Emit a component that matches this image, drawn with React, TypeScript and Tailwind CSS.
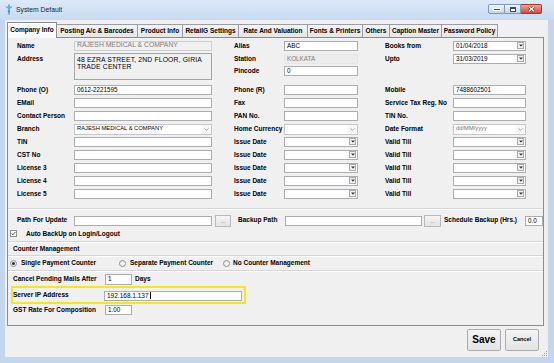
import React from "react";

const lbl = "whitespace-nowrap text-[6.5px] font-bold leading-none text-black";
const txt = "whitespace-nowrap text-[6.3px] leading-none";

function Field({ value = "", className = "" }: { value?: string; className?: string }) {
  return (
    <div
      className={`flex h-[10px] items-center overflow-hidden border border-[#abadb3] bg-white px-[2px] text-black ${txt} ${className}`}
    >
      {value}
    </div>
  );
}

function Arrow() {
  return (
    <svg width="4" height="3" viewBox="0 0 4 3">
      <path d="M0 0.4h4L2 2.8z" fill="#3a3a3a" />
    </svg>
  );
}

function DateBox({ value = "" }: { value?: string }) {
  return (
    <div className="flex h-[10px] items-center border border-[#abadb3] bg-white pl-[2px] pr-[1px]">
      <span className={`flex-1 overflow-hidden text-black ${txt}`}>{value}</span>
      <span className="flex h-[7px] w-[7px] items-center justify-center border border-[#a9a9a9] bg-[#f2f2f2]">
        <Arrow />
      </span>
    </div>
  );
}

function Combo({ value = "", muted = false }: { value?: string; muted?: boolean }) {
  return (
    <div className="flex h-[11px] items-center border border-[#c8c8c8] bg-white pl-[2px]">
      <span
        className={`flex-1 overflow-hidden whitespace-nowrap text-[5.8px] leading-none ${
          muted ? "text-[#6d6d6d]" : "text-black"
        }`}
      >
        {value}
      </span>
      <span className="flex h-full w-[9px] items-center justify-center bg-[#f7f7f7]">
        <svg width="5" height="3" viewBox="0 0 5 3">
          <path d="M0.6 0.5L2.5 2.4L4.4 0.5" fill="none" stroke="#8c8c8c" strokeWidth="0.8" />
        </svg>
      </span>
    </div>
  );
}

function DotsBtn({ w }: { w: string }) {
  return (
    <div
      className={`flex h-[12px] ${w} items-end justify-center border border-[#b9b9b9] bg-linear-to-b from-[#f6f6f6] to-[#e2e2e2] pb-[2px] text-[5px] leading-none text-[#444]`}
    >
      ...
    </div>
  );
}

type Pair = [string, React.ReactNode];

function FormRow({ a, b, c }: { a: Pair; b: Pair; c: Pair }) {
  return (
    <div className="flex h-[13px] items-start pl-[9px]">
      <div className={`flex h-[10px] w-[57px] items-center ${lbl}`}>{a[0]}</div>
      <div className="w-[138px]">{a[1]}</div>
      <div className={`ml-[22px] flex h-[10px] w-[50px] items-center ${lbl}`}>{b[0]}</div>
      <div className="w-[74px]">{b[1]}</div>
      <div className={`ml-[27px] flex h-[10px] w-[68px] items-center ${lbl}`}>{c[0]}</div>
      <div className="w-[73px]">{c[1]}</div>
    </div>
  );
}

function Etched() {
  return (
    <div>
      <div className="h-px bg-[#d5d5d5]" />
      <div className="h-px bg-white" />
    </div>
  );
}

function Radio({ checked = false }: { checked?: boolean }) {
  return (
    <span className="flex h-[7px] w-[7px] items-center justify-center rounded-full border border-[#8e8f8f] bg-linear-to-br from-[#e6e6e6] to-white">
      {checked && <span className="h-[3px] w-[3px] rounded-full bg-[#2b2b2b]" />}
    </span>
  );
}

function TitleBar() {
  return (
    <div className="flex h-[20px] shrink-0 items-start bg-linear-to-b from-[#dde9f7] to-[#c7daf0]">
      <svg className="ml-[5px] mt-[4px]" width="8" height="11" viewBox="0 0 8 11">
        <path d="M4 0.5V10.5" stroke="#2f8fb8" strokeWidth="1.2" />
        <path d="M0.5 2.5C2 2 3 3 4 4C5 3 6 2 7.5 2.5C6.5 4 5 4.5 4 5C3 4.5 1.5 4 0.5 2.5Z" fill="#4fb3d6" />
        <path d="M2.5 6.5C3.5 6 4.5 7.5 5.5 7C5 8.5 3 8.5 2.5 6.5Z" fill="#2f8fb8" />
      </svg>
      <span className="ml-[3px] mt-[6px] text-[6.8px] leading-[8px] text-[#1e1e1e]">System Default</span>
      <div className="ml-auto mr-[12px] mt-[4px] flex h-[10px]">
        <div className="flex w-[17px] items-end justify-center rounded-l-[2px] border border-[#7f97b7] bg-linear-to-b from-[#eef4fb] to-[#c3d4ea] pb-[2px]">
          <span className="box-content h-[1px] w-[6px] border border-white bg-[#3c4a5e]" />
        </div>
        <div className="flex w-[16px] items-center justify-center border-y border-r border-[#7f97b7] bg-linear-to-b from-[#eef4fb] to-[#c3d4ea]">
          <span className="h-[5px] w-[6px] border border-t-2 border-[#3c4a5e] bg-white" />
        </div>
        <div className="flex w-[21px] items-center justify-center rounded-r-[2px] border-y border-r border-[#9a3a30] bg-linear-to-b from-[#eba396] to-[#d2473a]">
          <svg width="7" height="6" viewBox="0 0 7 6">
            <path d="M1 0.8L6 5.2M6 0.8L1 5.2" stroke="#5a1a14" strokeWidth="2.2" />
            <path d="M1 0.8L6 5.2M6 0.8L1 5.2" stroke="white" strokeWidth="1.3" />
          </svg>
        </div>
      </div>
    </div>
  );
}

const tabs: [string, string][] = [
  ["Posting A/c & Barcodes", "w-[81px]"],
  ["Product Info", "w-[45px]"],
  ["RetailG Settings", "w-[56px]"],
  ["Rate And Valuation", "w-[69px]"],
  ["Fonts & Printers", "w-[55px]"],
  ["Others", "w-[27px]"],
  ["Caption Master", "w-[52px]"],
  ["Password Policy", "w-[56px]"],
];

export default function App() {
  return (
    <div className="flex h-[363px] w-[554px] flex-col overflow-hidden bg-[#c3d6ee] font-['Liberation_Sans',Arial,sans-serif] text-black">
      <TitleBar />
      <div className="ml-[5px] flex h-[337px] w-[543px] flex-col bg-[#f0f0f0]">
        {/* tab strip */}
        <div className="flex h-[17px] items-end pl-[2px]">
          <div
            className={`relative z-10 -mb-px flex h-[16px] w-[50px] items-center justify-center border-x border-t border-[#898c95] bg-[#fbfbfb] ${lbl}`}
          >
            Company Info
          </div>
          {tabs.map(([t, w]) => (
            <div
              key={t}
              className={`flex h-[13px] ${w} items-center justify-center border-r border-t border-[#9a9da5] bg-linear-to-b from-[#f3f3f3] to-[#e6e6e6] ${lbl}`}
            >
              {t}
            </div>
          ))}
        </div>

        {/* tab page */}
        <div className="ml-[2px] flex h-[291px] w-[537px] flex-col border border-[#898c95] bg-[#f0f0f0]">
          {/* block A */}
          <div className="mt-[3px] flex h-[39px] items-start">
            <div className="flex flex-col pl-[9px]">
              <div className="flex items-center">
                <div className={`flex h-[10px] w-[57px] items-center ${lbl}`}>Name</div>
                <div className="flex h-[10px] w-[138px] items-center border border-[#cfcfcf] bg-[#f0f0f0] px-[2px]">
                  <span className="whitespace-nowrap text-[6.8px] leading-none text-[#7c7c7c]">
                    RAJESH MEDICAL &amp; COMPANY
                  </span>
                </div>
              </div>
              <div className="mt-[2px] flex items-start">
                <div className={`flex h-[12px] w-[57px] items-center ${lbl}`}>Address</div>
                <div className="h-[27px] w-[138px] border border-[#a5a5a5] bg-[#f0f0f0] px-[2px] pt-[2px] text-[6.8px] leading-[7.5px] tracking-[0.15px]">
                  48 EZRA STREET, 2ND FLOOR, GIRIA
                  <br />
                  TRADE CENTER
                </div>
              </div>
            </div>

            <div className="ml-[22px] flex flex-col">
              <div className="flex items-center">
                <div className={`flex h-[10px] w-[50px] items-center ${lbl}`}>Alias</div>
                <Field value="ABC" className="w-[74px]" />
              </div>
              <div className="mt-[3px] flex items-center">
                <div className={`flex h-[10px] w-[50px] items-center ${lbl}`}>Station</div>
                <div className="flex h-[10px] w-[74px] items-center border border-[#e6e6e6] bg-[#ececec] px-[2px]">
                  <span className={`${txt} text-[#7c7c7c]`}>KOLKATA</span>
                </div>
              </div>
              <div className="mt-[2px] flex items-center">
                <div className={`flex h-[10px] w-[50px] items-center ${lbl}`}>Pincode</div>
                <Field value="0" className="w-[74px]" />
              </div>
            </div>

            <div className="ml-[27px] flex flex-col">
              <div className="flex items-center">
                <div className={`flex h-[10px] w-[68px] items-center ${lbl}`}>Books from</div>
                <div className="w-[73px]">
                  <DateBox value="01/04/2018" />
                </div>
              </div>
              <div className="mt-[3px] flex items-center">
                <div className={`flex h-[10px] w-[68px] items-center ${lbl}`}>Upto</div>
                <div className="w-[73px]">
                  <DateBox value="31/03/2019" />
                </div>
              </div>
            </div>
          </div>

          {/* block B */}
          <div className="mt-[5px] flex flex-col">
            <FormRow
              a={["Phone (O)", <Field value="0612-2221595" />]}
              b={["Phone (R)", <Field />]}
              c={["Mobile", <Field value="7488602501" />]}
            />
            <FormRow a={["EMail", <Field />]} b={["Fax", <Field />]} c={["Service Tax Reg. No", <Field />]} />
            <FormRow a={["Contact Person", <Field />]} b={["PAN No.", <Field />]} c={["TIN No.", <Field />]} />
            <FormRow
              a={["Branch", <Combo value="RAJESH MEDICAL & COMPANY" />]}
              b={["Home Currency", <Combo />]}
              c={["Date Format", <Combo value="dd/MM/yyyy" muted />]}
            />
            {["TIN", "CST No", "License 3", "License 4", "License 5"].map((n) => (
              <FormRow key={n} a={[n, <Field />]} b={["Issue Date", <DateBox />]} c={["Valid Till", <DateBox />]} />
            ))}
          </div>

          <div className="mt-[6px]">
            <Etched />
          </div>

          {/* backup paths */}
          <div className="mt-[5px] flex h-[12px] items-start pl-[9px]">
            <div className={`flex h-[11px] w-[57px] items-center ${lbl}`}>Path For Update</div>
            <Field className="mt-px w-[138px]" />
            <div className="ml-[3px]">
              <DotsBtn w="w-[16px]" />
            </div>
            <div className={`ml-[7px] flex h-[11px] w-[47px] items-center ${lbl}`}>Backup Path</div>
            <Field className="mt-px w-[137px]" />
            <div className="ml-[2px]">
              <DotsBtn w="w-[17px]" />
            </div>
            <div className={`ml-[3px] flex h-[11px] w-[81px] items-center ${lbl}`}>Schedule Backup (Hrs.)</div>
            <Field value="0.0" className="mt-px w-[18px]" />
          </div>

          <div className="mt-[3px] flex h-[8px] items-center pl-[2px]">
            <span className="flex h-[7px] w-[7px] items-center justify-center border border-[#8e8f8f] bg-white">
              <svg width="5" height="5" viewBox="0 0 5 5">
                <path d="M0.6 2.6L1.9 3.9L4.4 0.9" fill="none" stroke="#3b3b3b" strokeWidth="0.9" />
              </svg>
            </span>
            <span className={`ml-[9px] ${lbl}`}>Auto BackUp on Login/Logout</span>
          </div>

          <div className="mt-[3px]">
            <Etched />
          </div>
          <div className={`flex h-[12px] items-center pl-[5px] ${lbl}`}>Counter Management</div>
          <Etched />
          <div className="flex h-[13px] items-center pl-[2px]">
            <div className="flex w-[109px] items-center">
              <Radio checked />
              <span className={`ml-[4px] ${lbl}`}>Single Payment Counter</span>
            </div>
            <div className="flex w-[104px] items-center">
              <Radio />
              <span className={`ml-[4px] ${lbl}`}>Separate Payment Counter</span>
            </div>
            <div className="flex items-center">
              <Radio />
              <span className={`ml-[3px] ${lbl}`}>No Counter Management</span>
            </div>
          </div>
          <Etched />

          {/* misc */}
          <div className="mt-[2px] flex h-[11px] items-center pl-[5px]">
            <div className={`flex w-[92px] items-center ${lbl}`}>Cancel Pending Mails After</div>
            <Field value="1" className="h-[11px] w-[27px]" />
            <span className={`ml-[3px] ${lbl}`}>Days</span>
          </div>
          <div className="ml-[3px] mt-px flex h-[18px] w-[235px] items-start border-2 border-[#f6e71a]">
            <div className={`flex h-[14px] w-[91px] items-center ${lbl}`}>Server IP Address</div>
            <div className="mt-[3px] flex h-[10px] w-[138px] items-center border border-[#abadb3] bg-white px-[2px]">
              <span className={`${txt} text-[6.5px]`}>192.168.1.137</span>
              <span className="ml-px h-[7px] w-px bg-black" />
            </div>
          </div>
          <div className="mt-px flex h-[10px] items-center pl-[5px]">
            <div className={`flex w-[92px] items-center ${lbl}`}>GST Rate For Composition</div>
            <Field value="1.00" className="w-[27px]" />
          </div>
        </div>

        {/* buttons */}
        <div className="mt-[3px] flex justify-end gap-[4px] pr-[9px]">
          <div className="flex h-[22px] w-[34px] items-center justify-center rounded-[2px] border border-[#acacac] bg-linear-to-b from-[#f4f4f4] to-[#e4e4e4]">
            <span className="text-[10px] font-bold leading-none">Save</span>
          </div>
          <div className="flex h-[22px] w-[34px] items-center justify-center rounded-[2px] border border-[#acacac] bg-linear-to-b from-[#f4f4f4] to-[#e4e4e4]">
            <span className="text-[5.5px] font-bold leading-none">Cancel</span>
          </div>
        </div>
        <div className="mr-[1px] mt-auto flex justify-end pb-px">
          <svg width="5" height="5" viewBox="0 0 5 5">
            <rect x="4" y="0" width="1" height="1" fill="#a0a0a0" />
            <rect x="2" y="2" width="1" height="1" fill="#a0a0a0" />
            <rect x="4" y="2" width="1" height="1" fill="#a0a0a0" />
            <rect x="0" y="4" width="1" height="1" fill="#a0a0a0" />
            <rect x="2" y="4" width="1" height="1" fill="#a0a0a0" />
            <rect x="4" y="4" width="1" height="1" fill="#a0a0a0" />
          </svg>
        </div>
      </div>
    </div>
  );
}
